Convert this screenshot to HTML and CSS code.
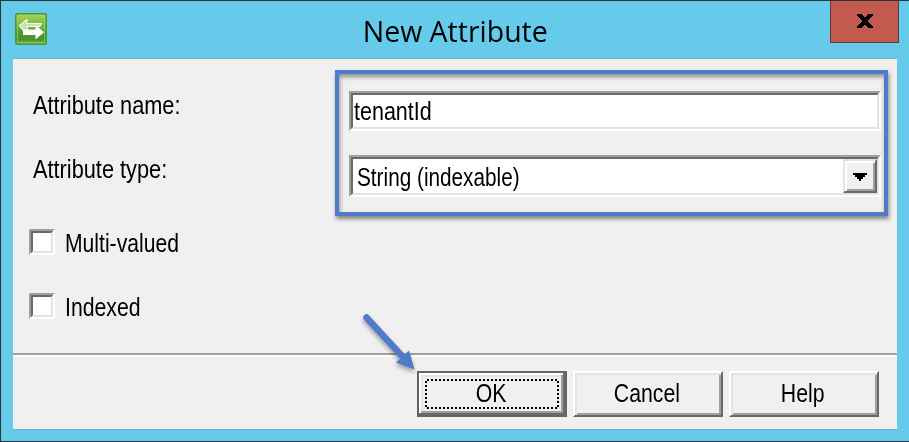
FILE: index.html
```html
<!DOCTYPE html>
<html lang="en">
<head>
<meta charset="utf-8">
<title>New Attribute</title>
<link rel="stylesheet" href="styles.css">
</head>
<body>
<div class="window">
  <header class="titlebar">
    <svg class="app-icon" width="32" height="32" viewBox="0 0 32 32">
      <defs>
        <linearGradient id="green" x1="0" y1="0" x2="0" y2="1">
          <stop offset="0" stop-color="#a8d556"/>
          <stop offset=".45" stop-color="#72b43e"/>
          <stop offset=".55" stop-color="#559d2d"/>
          <stop offset=".85" stop-color="#4a942b"/>
          <stop offset="1" stop-color="#7ab559"/>
        </linearGradient>
      </defs>
      <rect x=".75" y=".75" width="30.5" height="30.5" rx="1.5" fill="url(#green)" stroke="#4b9b2c" stroke-width="1.5"/>
      <rect x="2.5" y="2.5" width="27" height="27" fill="none" stroke="#a5d67b" stroke-opacity=".6"/>
      <path d="M4.500 12.500 12 6.500v4h14.500l-2 3H12.500v4.500H9z" fill="#c5e3ac" stroke="#f4fbef" stroke-width="1.200" stroke-linejoin="round"/>
      <path d="M8 16.500h12.500V12l8.500 7.200-8.500 7.300V22H8z" fill="#fff"/>
    </svg>
    <h1 class="title"><span>New Attribute</span></h1>
    <button class="close" aria-label="Close">
      <svg width="16" height="14" viewBox="0 0 16 14" shape-rendering="crispEdges"><path d="M0 0h5l3 4 3-4h5v1l-5 6 5 6v1h-5l-3-4-3 4H0v-1l5-6-5-6z"/></svg>
    </button>
  </header>
  <main class="client">
    <section class="form">
      <div class="labels">
        <label class="text name">Attribute name:</label>
        <label class="text type">Attribute type:</label>
      </div>
      <div class="highlight">
        <div class="sunken input"><span class="text tenant">tenantId</span></div>
        <div class="sunken select">
          <span class="text string">String (indexable)</span>
          <span class="drop"><svg width="14" height="8" viewBox="0 0 14 8" shape-rendering="crispEdges"><path d="M0 0h14v2h-2v2h-2v2H8v2H6V6H4V4H2V2H0z"/></svg></span>
        </div>
      </div>
    </section>
    <section class="checks">
      <div class="check"><span class="sunken box"></span><span class="text multi">Multi-valued</span></div>
      <div class="check"><span class="sunken box"></span><span class="text indexed">Indexed</span></div>
    </section>
    <footer class="actions">
      <button class="button default">
        <span class="text ok">OK</span>
        <svg class="focus" width="134" height="30" viewBox="0 0 134 30" shape-rendering="crispEdges"><path d="M2 1H134M2 29H134M1 2V30M133 2V30" fill="none" stroke="#000" stroke-width="2" stroke-dasharray="2 2"/></svg>
      </button>
      <button class="button"><span class="text cancel">Cancel</span></button>
      <button class="button"><span class="text help">Help</span></button>
      <svg class="pointer" width="70" height="70" viewBox="0 0 70 70">
        <path d="M10.500 10.500 46 49" stroke="#4f7cca" stroke-width="6.500" stroke-linecap="round"/>
        <path d="M40 55.500 53 43.500 58.500 62.500z" fill="#4f7cca"/>
      </svg>
    </footer>
  </main>
</div>
</body>
</html>
```
FILE: styles.css
```css
* { box-sizing: border-box; }
body { margin: 0; overflow: hidden; }
button { font: inherit; color: inherit; border-radius: 0; padding: 0; }

.window {
  width: 909px;
  height: 442px;
  background: #66caea;
  border: 1px solid #2d3338;
  border-right: 0;
  color: #000;
  font: 25px/28px "Liberation Sans", Arial, sans-serif;
}
.titlebar { display: flex; height: 57px; align-items: flex-start; }
.app-icon { margin: 12px 0 0 14px; flex: none; }
.title {
  flex: 1;
  margin: 10px 0 0;
  padding-left: 33px;
  text-align: center;
  font: 400 29px/40px "Open Sans", "Noto Sans", sans-serif;
}
.title span { display: inline-block; transform: scaleX(.982); }
.close {
  flex: none;
  width: 69px;
  height: 42px;
  margin-right: 10px;
  border: 1px solid #593b41;
  border-top: 0;
  background: #c35a50;
  display: flex;
  justify-content: center;
  padding-top: 13px;
}
.client {
  width: 884px;
  height: 372px;
  margin-left: 12px;
  background: #f0f0f0;
  border-top: 1px solid #83a9bd;
  border-bottom: 1px solid #6daac4;
}
.form { display: flex; padding-top: 11px; }
.labels { width: 322px; padding: 21px 0 0 20px; display: flex; flex-direction: column; gap: 36px; }
.text { display: block; width: max-content; white-space: nowrap; transform-origin: 0 0; }
.name, .type { transform: scaleX(.87); }
.highlight {
  width: 553px;
  height: 146px;
  border: 4px solid #4f7cca;
  padding: 17px 3px 15px 10px;
  display: flex;
  flex-direction: column;
  gap: 24px;
  box-shadow: 1px 3px 4px rgba(0,0,0,.45), inset 1px 3px 4px rgba(0,0,0,.4);
}
.sunken {
  border: 2px solid;
  border-color: #a0a0a0 #fff #fff #a0a0a0;
  background: #fff;
  display: flex;
  position: relative;
}
.sunken::before {
  content: "";
  position: absolute;
  inset: 0;
  border: 2px solid;
  border-color: #696969 #e3e3e3 #e3e3e3 #696969;
}
.input { height: 40px; padding: 4px 0 0 3px; }
.select { height: 42px; padding: 2px 2px 2px 6px; justify-content: space-between; }
.select .text { padding-top: 4px; }
.tenant { transform: scaleX(.86); }
.string { transform: scaleX(.83); }
.drop, .button {
  border: 2px solid;
  border-color: #e3e3e3 #696969 #696969 #e3e3e3;
  background: #f0f0f0;
}
.drop {
  width: 34px;
  height: 34px;
  position: relative;
  padding: 12px 0 0 8px;
  box-shadow: inset 2px 2px #fff, inset -2px -2px #a0a0a0;
  line-height: 0;
}
.drop svg { display: block; }
.checks { padding: 12px 0 0 16px; display: flex; flex-direction: column; gap: 36px; }
.check { display: flex; height: 28px; gap: 10px; }
.check .text { margin-top: 1px; }
.box { width: 26px; height: 26px; margin-top: 1px; }
.multi { transform: scaleX(.845); }
.indexed { transform: scaleX(.85); }
.actions {
  margin-top: 33px;
  height: 77px;
  border-top: 2px solid #a0a0a0;
  box-shadow: inset 0 2px #fff;
  display: flex;
  gap: 6px;
  padding: 16px 0 0 404px;
  position: relative;
}
.button {
  width: 150px;
  height: 46px;
  border-color: #fff #696969 #696969 #fff;
  box-shadow: inset 2px 2px #e3e3e3, inset -2px -2px #a0a0a0;
  display: flex;
  justify-content: center;
  align-items: flex-start;
  padding: 6px 2px 0 0;
  position: relative;
}
.button .text { transform-origin: 50% 0; transform: scaleX(.85); }
.default {
  border-color: #646464;
  box-shadow: inset -2px -2px #696969, inset 2px 2px #fff, inset -4px -4px #a0a0a0, inset 4px 4px #e3e3e3;
}
.focus { position: absolute; left: 6px; top: 6px; }
.pointer {
  position: absolute;
  left: 343px;
  top: -48px;
  overflow: visible;
  filter: drop-shadow(0 3px 2px rgba(0,0,0,.35));
}
```
